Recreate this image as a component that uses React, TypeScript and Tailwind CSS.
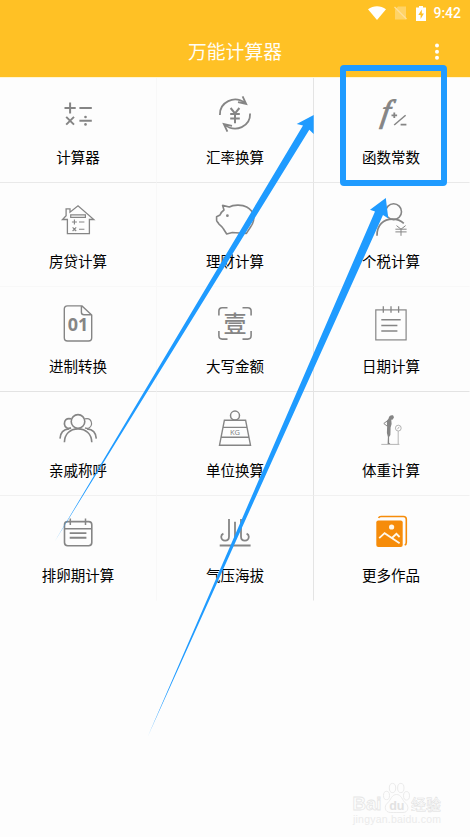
import type { ReactNode } from "react";

type Tool = {
  name: string;
  icon: ReactNode;
};

function Icon({ children }: { children: ReactNode }) {
  return (
    <svg
      viewBox="0 0 48 48"
      className="h-12 w-12 shrink-0 text-[#858585]"
      fill="none"
      stroke="currentColor"
      strokeWidth="1.6"
    >
      {children}
    </svg>
  );
}

const tools: Tool[] = [
  {
    name: "计算器",
    icon: (
      <Icon>
        <path
          d="M10.5 18H21.7M16.1 12.4V23.6M25.4 18H37.8M12.2 26.9L20 34.6M20 26.9L12.2 34.6M25.4 30.7H37.8"
          strokeWidth="2"
        />
        <circle cx="31.5" cy="27" r="1.3" fill="currentColor" stroke="none" />
        <circle cx="31.5" cy="34.4" r="1.3" fill="currentColor" stroke="none" />
      </Icon>
    ),
  },
  {
    name: "汇率换算",
    icon: (
      <Icon>
        <path d="M8.9 25C8.5 12.5 23 4.5 34.6 13.4M31.6 6.3L35.2 14L27 12.2" strokeWidth="1.8" />
        <path d="M39.1 23.5C39.5 36 25 43.5 13.4 34.6M16.4 41.7L12.8 34L21 35.8" strokeWidth="1.8" />
        <path d="M19.6 18L24 23.4L28.4 18M24 23.4V33.2M19.2 24H28.8M19.2 28.5H28.8" strokeWidth="2" />
      </Icon>
    ),
  },
  {
    name: "函数常数",
    icon: (
      <Icon>
        <text
          transform="translate(13 32.2) skewX(-9)"
          className="font-['Liberation_Serif',serif] text-[32px] italic"
          fill="currentColor"
          strokeWidth="0.9"
        >
          f
        </text>
        <path d="M24.5 25.3H30.1M27.3 22.5V28.1M33.6 34.7H39.4" strokeWidth="1.8" />
        <path d="M27.2 35L38.6 25.2" strokeWidth="1.5" />
      </Icon>
    ),
  },
  {
    name: "房贷计算",
    icon: (
      <Icon>
        <path
          d="M13.4 24.5H8.5L12.1 20.8V13.8H16V17.2L24 10.8L39.8 24.5H35.4V38.6H13.4Z"
          strokeWidth="1.3"
        />
        <path d="M16.7 19.8H31.4V22.4H16.7Z" strokeWidth="1.2" />
        <path
          d="M17.9 27H22.9M20.4 24.5V29.5M25 27H30.4M18.6 32.4L22.2 36M22.2 32.4L18.6 36M25 34.2H30.4"
          strokeWidth="1.1"
        />
      </Icon>
    ),
  },
  {
    name: "理财计算",
    icon: (
      <Icon>
        <path
          d="M13 15L11.6 10.4L18.3 12C22 9.8 31 9.3 35.7 12C39.5 14.2 41.5 16.5 42.4 19.5C43.4 24 42.5 28 39.7 31.7L35.4 38.4L28.3 38L21.3 37.5L15.7 39L12.5 34C11 31 9 30.5 7.7 28.8C7.2 27 5.7 27 5.6 25.2V21.7L9 20C9.8 18 11.5 16 13 15Z"
          strokeWidth="1.6"
          strokeLinejoin="round"
        />
        <circle cx="16.4" cy="20.7" r="1.4" fill="currentColor" stroke="none" />
      </Icon>
    ),
  },
  {
    name: "个税计算",
    icon: (
      <Icon>
        <circle cx="26.6" cy="16.7" r="7.9" strokeWidth="1.6" />
        <path d="M10 40.7C9.8 30 16.5 24.2 25.5 24.2C30.5 24.2 34 25.8 36.8 28.3" strokeWidth="1.7" />
        <path d="M29.5 30.6L34 34.2L38.6 30.6M34 34.2V40.8M28.4 34.2H39.6M28.4 36.9H39.6" strokeWidth="1" />
      </Icon>
    ),
  },
  {
    name: "进制转换",
    icon: (
      <Icon>
        <path
          d="M13.5 6.9H28L37.7 16V38.8Q37.7 42 34.5 42H13.5Q10.3 42 10.3 38.8V10.1Q10.3 6.9 13.5 6.9ZM27.4 7V13.2Q27.4 15.7 30 15.7H37.5"
          strokeWidth="1.4"
        />
        <text
          x="24"
          y="32.4"
          textAnchor="middle"
          className="font-['Noto_Sans',sans-serif] text-[18px] font-bold"
          fill="currentColor"
          stroke="none"
        >
          01
        </text>
      </Icon>
    ),
  },
  {
    name: "大写金额",
    icon: (
      <Icon>
        <path
          d="M7.9 16.5V12Q7.9 8.7 11.2 8.7H16.5M31.5 8.7H36.8Q40.1 8.7 40.1 12V16.5M40.1 32V36.8Q40.1 40.1 36.8 40.1H31.5M16.5 40.1H11.2Q7.9 40.1 7.9 36.8V32"
          strokeWidth="1.6"
        />
        <text
          x="24"
          y="33.3"
          textAnchor="middle"
          className="font-['Noto_Sans_CJK_SC',sans-serif] text-[23px] font-medium"
          fill="currentColor"
          stroke="none"
        >
          壹
        </text>
      </Icon>
    ),
  },
  {
    name: "日期计算",
    icon: (
      <Icon>
        <rect x="8.8" y="10.9" width="30.3" height="30" strokeWidth="1.2" />
        <path d="M16.3 7.3V13.7M24 7.3V13.7M31.6 7.3V13.7" strokeWidth="1.3" />
        <path d="M14.3 20.7H33.7M14.3 26.5H30.4M14.3 32.1H30.4" strokeWidth="1.5" />
      </Icon>
    ),
  },
  {
    name: "亲戚称呼",
    icon: (
      <Icon>
        <circle cx="24" cy="17.4" r="6.8" strokeWidth="1.6" />
        <path d="M10.4 38.3C10.6 30 16 24.9 24 24.9S37.6 30 37.8 38.3" strokeWidth="1.6" />
        <path d="M17 14.9C12.5 13.5 10.2 16.7 10.4 20C10.7 23.2 13.7 25.3 17 23.9" strokeWidth="1.7" />
        <path d="M31 14.9C35.5 13.5 37.8 16.7 37.6 20C37.3 23.2 34.3 25.3 31 23.9" strokeWidth="1.2" />
        <path d="M6 34.6C6.3 29 9.5 25.4 15 24.9M42.3 34.6C42 29 38.5 25.4 33 24.9" strokeWidth="1.6" />
      </Icon>
    ),
  },
  {
    name: "单位换算",
    icon: (
      <Icon>
        <circle cx="24" cy="11.6" r="4.5" strokeWidth="1.5" />
        <path d="M13.4 16.2H34.6L39.5 41.2H8.5ZM12.1 23.4H35.9M10.2 33.3H37.8" strokeWidth="1.4" />
        <text
          x="24"
          y="31"
          textAnchor="middle"
          className="font-['Noto_Sans',sans-serif] text-[7.5px]"
          fill="currentColor"
          stroke="none"
        >
          KG
        </text>
      </Icon>
    ),
  },
  {
    name: "体重计算",
    icon: (
      <Icon>
        <path
          d="M21.6 14.5C21.8 11.8 24 10.7 26 11.3L27 13.2L25.8 15.4L24.3 15.8L24.6 20L23.6 23.5L23.4 31L22.1 33V38.8L23.4 40H20.6L20.9 33L19.9 29L20.1 23L19.8 17Z"
          fill="currentColor"
          stroke="none"
        />
        <path d="M20.6 16.6L16.8 19.5L20 22" strokeWidth="1" />
        <path d="M14.3 40.4H32.4M31.2 27.2V40" strokeWidth="0.6" />
        <circle cx="31.3" cy="24.1" r="2.9" strokeWidth="0.6" />
        <path d="M30.5 25.2L32.2 22.8" strokeWidth="0.6" />
      </Icon>
    ),
  },
  {
    name: "排卵期计算",
    icon: (
      <Icon>
        <rect x="10.5" y="13.6" width="27.3" height="24.2" rx="3.2" strokeWidth="1.6" />
        <path d="M16.3 10.6V17M31.5 10.6V17M10.5 20.8H37.8" strokeWidth="1.5" />
        <path d="M15.7 25.1H32.4M15.7 29.7H32.4" strokeWidth="1.9" />
      </Icon>
    ),
  },
  {
    name: "气压海拔",
    icon: (
      <Icon>
        <path
          d="M18 11V28.5C18 31 16.3 32.6 14.1 32.6S10.2 31 10.2 28.8C10.2 27.2 11 26.2 12.4 25.6M24 13.7V32.4M30 11V28.5C30 31 31.7 32.6 33.9 32.6S37.8 31 37.8 28.8C37.8 27.2 37 26.2 35.6 25.6"
          strokeWidth="1.8"
        />
        <path d="M8.7 37.5H39.6" strokeWidth="2" />
      </Icon>
    ),
  },
  {
    name: "更多作品",
    icon: (
      <Icon>
        <rect x="9.3" y="12.4" width="26.4" height="26.6" rx="2" fill="#f68c0a" stroke="none" />
        <path d="M11.6 10C12 8.9 12.8 8.5 14 8.5H36.5Q39.3 8.5 39.3 11.3V34.4Q39.3 36.4 37.7 37" stroke="#f68c0a" strokeWidth="1.6" />
        <circle cx="24.6" cy="19" r="2.6" fill="#fff8ea" stroke="none" />
        <path d="M12.2 30.2L17.6 25.2L32.6 35.2M24.9 30L29.4 25.8L32.6 29" stroke="#fff8ea" strokeWidth="1.8" />
      </Icon>
    ),
  },
];

// Divider tones differ per row and column
const rowLines = ["border-b-[#e9e9e9]", "border-b-[#f8f8f8]", "border-b-[#e3e3e3]", "border-b-[#f1f1f1]", "border-b-transparent"];
const colLines = ["border-r-[#f8f8f8]", "border-r-[#e4e4e4]", "border-r-transparent pr-px"];

function StatusBar() {
  return (
    <div className="flex h-[26px] items-center justify-end pr-[9px] text-white">
      <svg viewBox="0 0 18 14" className="mr-2 h-3.5 w-[18px]" fill="currentColor">
        <path d="M0 3.2C5.3-.8 12.7-.8 18 3.2L9 14Z" />
      </svg>
      <svg viewBox="0 0 13 14" className="mr-[9px] h-3.5 w-[13px]">
        <path d="M4 .5H12V13.5H1V3.5Z" fill="#fff" opacity=".3" />
        <path d="M.5 1L12.5 13" stroke="#ffe09a" strokeWidth="1.2" />
      </svg>
      <svg viewBox="0 0 10 15" className="mr-[7px] h-[15px] w-2.5">
        <path d="M3 0H7V1.5H10V15H0V1.5H3Z" fill="#fff" />
        <path d="M5.8 3.4L2.3 9H4.6V13L7.9 7.4H5.8Z" fill="#ffc125" />
      </svg>
      <span className="font-['Roboto',sans-serif] text-[14px] leading-none font-medium">9:42</span>
    </div>
  );
}

function Header() {
  return (
    <header className="h-[78px] border-b border-[#fff6d4] bg-[#ffc125]">
      <StatusBar />
      <div className="grid h-[51px] grid-cols-[1fr_auto_1fr] items-center">
        <h1 className="col-start-2 text-[18.8px] leading-none text-[#fffdf5]">万能计算器</h1>
        <svg viewBox="0 0 6 18" className="mr-[30px] h-[18px] w-1.5 justify-self-end" fill="#fff">
          <circle cx="3" cy="2.6" r="2" />
          <circle cx="3" cy="8.7" r="2" />
          <circle cx="3" cy="14.8" r="2" />
        </svg>
      </div>
    </header>
  );
}

function ToolCell({ tool, index }: { tool: Tool; index: number }) {
  const row = Math.floor(index / 3);
  return (
    <div className={`flex flex-col items-center border-r border-b pt-3 ${rowLines[row]} ${colLines[index % 3]}`}>
      {tool.icon}
      <span className="mt-[9.5px] text-[14.5px] leading-[18px] whitespace-nowrap text-black">{tool.name}</span>
    </div>
  );
}

function Annotations() {
  return (
    <>
      <svg viewBox="0 0 470 837" className="absolute inset-0 h-[837px] w-[470px]" fill="#1f9bff">
        <polygon points="55,541 303,125.5 296.7,124 313.7,115 313.7,134 309.3,129.7" />
        <polygon points="148,736 375,211.5 370,209.7 385.8,198 388.3,218.5 383,215" />
      </svg>
      <div className="absolute top-[65px] left-[340px] h-[121px] w-[107px] rounded-[4px] border-6 border-[#1f9bff]" />
    </>
  );
}

function Watermark() {
  return (
    <svg
      viewBox="0 0 100 46"
      className="absolute top-[780px] left-[350px] h-[46px] w-[100px] font-['Liberation_Sans','Noto_Sans_CJK_SC',sans-serif]"
      fill="#fdfdfd"
      stroke="#e6e6e6"
      strokeWidth="0.8"
    >
      <text x="2.5" y="30" className="text-[19px] font-bold" textLength="29" lengthAdjust="spacingAndGlyphs">
        Bai
      </text>
      <path d="M46.5 14.5C41.5 14.5 41 20 37.5 23C33.5 26.5 35 32.5 40.5 32.5C44 32.5 49.5 32.5 53 32.5C58.5 32.5 59.5 26.5 55.5 23C52 20 51.5 14.5 46.5 14.5Z" />
      <ellipse cx="36.5" cy="15.5" rx="3" ry="4.2" />
      <ellipse cx="42.5" cy="8" rx="3.2" ry="4.6" />
      <ellipse cx="50.8" cy="8" rx="3.2" ry="4.6" />
      <ellipse cx="56.5" cy="15.8" rx="3" ry="4.2" />
      <text x="39.2" y="30" className="text-[12.5px] font-bold" fill="#e2e2e2" stroke="none">du</text>
      <text x="61" y="30" className="text-[15px] font-medium" strokeWidth="0.5" stroke="#dedede">经验</text>
      <text x="3" y="43" className="text-[10.5px]" textLength="88" fill="#ebebeb" stroke="none">jingyan.baidu.com</text>
    </svg>
  );
}

export default function App() {
  return (
    <div className="relative h-[837px] w-[470px] overflow-hidden bg-[#fdfdfd] font-['Noto_Sans_CJK_SC',sans-serif]">
      <Header />
      <main className="grid h-[523px] grid-cols-[157px_157px_156px] grid-rows-5">
        {tools.map((tool, i) => (
          <ToolCell key={tool.name} tool={tool} index={i} />
        ))}
      </main>
      <Annotations />
      <Watermark />
    </div>
  );
}
